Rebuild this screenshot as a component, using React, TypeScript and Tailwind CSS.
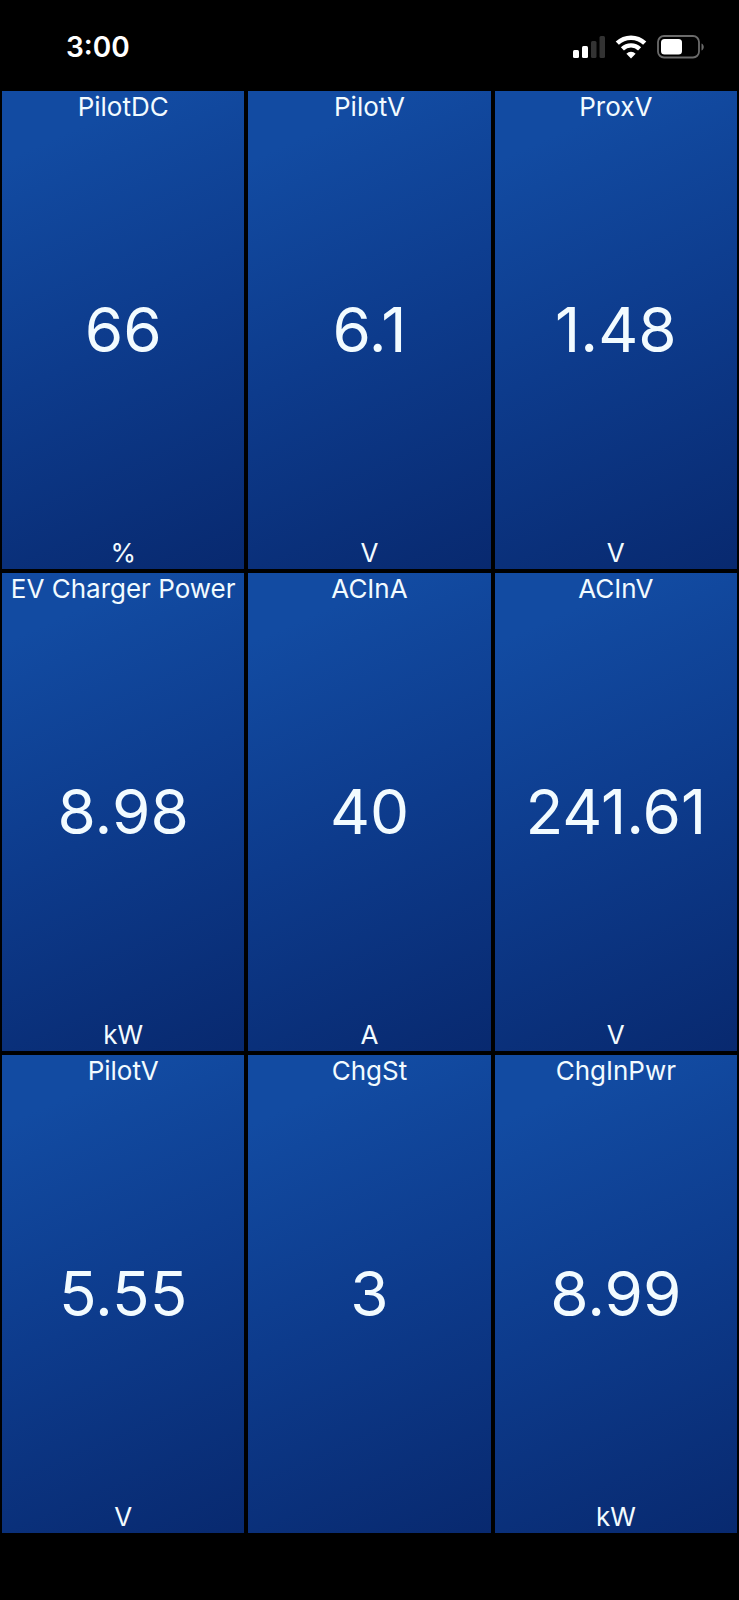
type Gauge = {
  title: string;
  value: string;
  unit?: string;
};

const gauges: Gauge[] = [
  { title: 'PilotDC', value: '66', unit: '%' },
  { title: 'PilotV', value: '6.1', unit: 'V' },
  { title: 'ProxV', value: '1.48', unit: 'V' },
  { title: 'EV Charger Power', value: '8.98', unit: 'kW' },
  { title: 'ACInA', value: '40', unit: 'A' },
  { title: 'ACInV', value: '241.61', unit: 'V' },
  { title: 'PilotV', value: '5.55', unit: 'V' },
  { title: 'ChgSt', value: '3' },
  { title: 'ChgInPwr', value: '8.99', unit: 'kW' },
];

function SignalIcon() {
  return (
    <svg width="34" height="24" viewBox="0 0 34 24" aria-label="Signal">
      <rect x="2" y="15" width="6" height="8" rx="1.5" fill="#fff" />
      <rect x="11" y="11" width="6" height="12" rx="1.5" fill="#fff" />
      <rect x="20" y="6" width="5.500" height="17" rx="1.500" fill="#333" />
      <rect x="28.500" y="1" width="5.500" height="22" rx="1.500" fill="#333" />
    </svg>
  );
}

function WifiIcon() {
  return (
    <svg width="32" height="24" viewBox="0 0 32 24" fill="none" aria-label="Wi-Fi">
      <path d="M2.3 8.2a19.8 19.8 0 0 1 27.4 0" stroke="#fff" strokeWidth="4.6" />
      <path d="M7.4 13.8a12.4 12.4 0 0 1 17.2 0" stroke="#fff" strokeWidth="4.4" />
      <path d="M16 23.4l-4.6-4.7a6.6 6.6 0 0 1 9.2 0z" fill="#fff" />
    </svg>
  );
}

function BatteryIcon() {
  return (
    <svg width="48" height="24" viewBox="0 0 48 24" fill="none" aria-label="Battery">
      <rect x="1" y="1" width="41" height="21.5" rx="6" stroke="#6b6b6b" strokeWidth="1.8" />
      <rect x="4" y="4" width="21" height="15.5" rx="3.5" fill="#fff" />
      <path d="M44.500 8.500c3 1.200 3 5.800 0 7z" fill="#6b6b6b" />
    </svg>
  );
}

function StatusBar() {
  return (
    <header className="flex h-[91px] shrink-0 items-center justify-between pt-[2px] pr-[34px] pl-[66px]">
      <time className="text-[28px] leading-9 font-semibold">3:00</time>
      <div className="flex items-center gap-[10px]">
        <SignalIcon />
        <WifiIcon />
        <BatteryIcon />
      </div>
    </header>
  );
}

function GaugeTile({ title, value, unit }: Gauge) {
  return (
    <section className="flex flex-col items-center justify-between bg-linear-[156deg] from-[#124ba2] from-12% via-[#0d3b8c] via-52% to-[#08296f] text-[#f2fbff]">
      <h2 className="text-[26px] leading-8 whitespace-nowrap">{title}</h2>
      <p className="text-[62px] leading-none">{value}</p>
      <p className="h-8 text-[26px] leading-8">{unit}</p>
    </section>
  );
}

export default function App() {
  return (
    <div className="flex min-h-screen flex-col bg-black font-['Inter',sans-serif] text-white">
      <StatusBar />
      <main className="grid flex-1 grid-cols-3 grid-rows-3 gap-1 px-[2px]">
        {gauges.map((gauge, i) => (
          <GaugeTile key={i} {...gauge} />
        ))}
      </main>
      {/* Home indicator area */}
      <footer className="h-[67px] shrink-0" />
    </div>
  );
}
